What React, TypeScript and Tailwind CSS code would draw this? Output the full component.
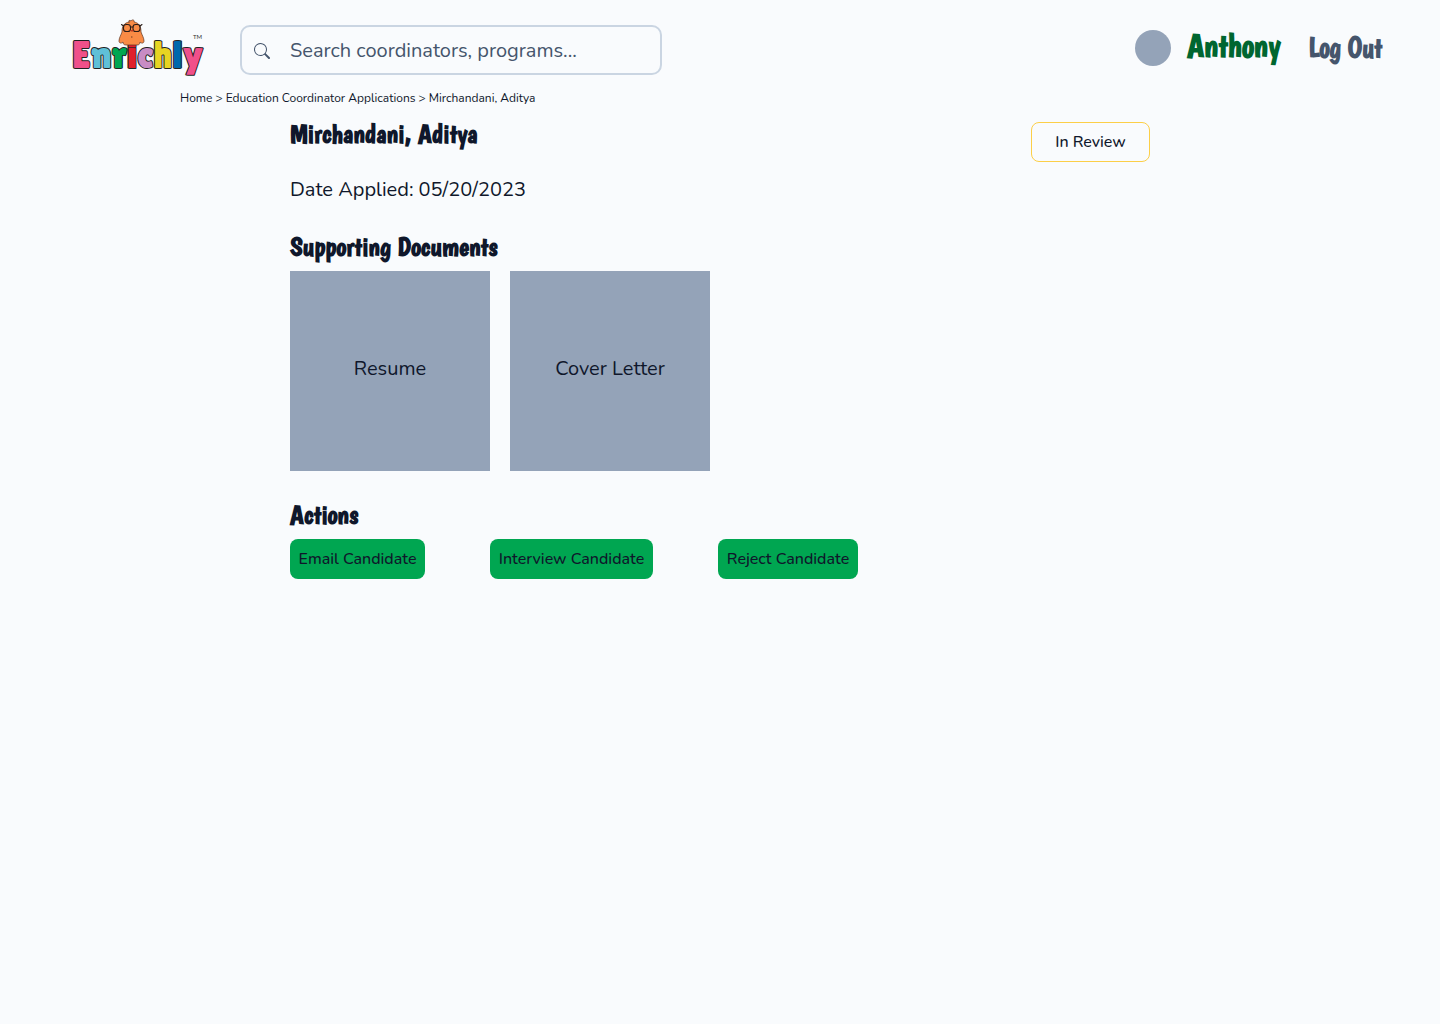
import { useState } from "react";
import { BsSearch } from "react-icons/bs";

const documents = ["Resume", "Cover Letter"];

const actions = [
  { label: "Email Candidate", width: "w-[135px]" },
  { label: "Interview Candidate", width: "w-[163px]" },
  { label: "Reject Candidate", width: "w-[140px]" },
];

const logoLetters = [
  { char: "E", fill: "#f0508a" },
  { char: "n", fill: "#5fc0d8" },
  { char: "r", fill: "#00a651" },
  { char: "i", fill: "#e0202c" },
  { char: "c", fill: "#c88cc4" },
  { char: "h", fill: "#e8d422" },
  { char: "l", fill: "#0068ac" },
  { char: "y", fill: "#f0508a" },
];

export default function App() {
  return (
    <div className="min-h-screen bg-[#f9fbfd] font-['Nunito','Lato',sans-serif] text-slate-900">
      <Header />
      <nav aria-label="Breadcrumb" className="mx-auto max-w-[1080px] text-[12px] leading-4">
        <ol className="flex gap-[3px]">
          <li>
            <a href="#home">Home</a>
          </li>
          <li aria-hidden>&gt;</li>
          <li>
            <a href="#applications">Education Coordinator Applications</a>
          </li>
          <li aria-hidden>&gt;</li>
          <li aria-current="page">Mirchandani, Aditya</li>
        </ol>
      </nav>
      <Application />
    </div>
  );
}

function Header() {
  const [query, setQuery] = useState("");

  return (
    <header className="flex h-[90px] items-start justify-between pl-[70px] pr-[58px]">
      <div className="flex items-start gap-9 pt-[18px]">
        <a href="#home" aria-label="Enrichly">
          <Logo />
        </a>
        <div className="mt-[7px] flex h-[50px] w-[422px] items-center gap-5 rounded-[10px] border-2 border-slate-300 px-3 pt-[2px]">
          <BsSearch className="size-4 shrink-0 text-slate-600" />
          <input
            type="text"
            aria-label="Search coordinators and programs"
            value={query}
            onChange={(e) => setQuery(e.target.value)}
            placeholder="Search coordinators, programs..."
            className="w-full bg-transparent text-[20px] outline-none placeholder:text-slate-600"
          />
        </div>
      </div>

      <div className="flex h-24 items-center font-['Chewy','Boogaloo',sans-serif] font-bold">
        <span className="size-9 rounded-full bg-[#94a3b8]" />
        <a href="#profile" className="ml-4 pb-1 text-[33px] leading-9 text-[#006630]">
          Anthony
        </a>
        <button type="button" className="ml-7 text-[28px] leading-9 text-slate-600">
          Log Out
        </button>
      </div>
    </header>
  );
}

function Application() {
  return (
    <main className="mx-auto max-w-[860px] pt-4">
      <div className="flex items-start justify-between">
        <Heading level={1}>Mirchandani, Aditya</Heading>
        <button type="button" className="h-10 w-[119px] rounded-lg border border-[#fccf48] text-[16px] font-medium">
          In Review
        </button>
      </div>
      <p className="mt-[14px] text-[20px] leading-7">Date Applied: 05/20/2023</p>

      <section className="mt-[31px]">
        <Heading>Supporting Documents</Heading>
        <div className="mt-2 flex gap-5">
          {documents.map((name) => (
            <button key={name} type="button" className="size-[200px] bg-[#94a3b8] pb-1 text-[20px]">
              {name}
            </button>
          ))}
        </div>
      </section>

      <section className="mt-8">
        <Heading>Actions</Heading>
        <div className="mt-2 flex gap-[65px]">
          {actions.map((action) => (
            <button
              key={action.label}
              type="button"
              className={`h-10 rounded-lg bg-[#00a651] text-[16px] font-medium whitespace-nowrap ${action.width}`}
            >
              {action.label}
            </button>
          ))}
        </div>
      </section>
    </main>
  );
}

function Heading({ level = 2, children }: { level?: 1 | 2; children: React.ReactNode }) {
  const Tag = level === 1 ? "h1" : "h2";
  return <Tag className="pb-1 font-['Chewy','Boogaloo',sans-serif] text-[27px] leading-6 font-bold">{children}</Tag>;
}

function Logo() {
  return (
    <svg width="134" height="60" viewBox="-2 -2 134 60" className="overflow-visible" aria-hidden>
      <text
        x="0"
        y="48"
        fontFamily="'Lilita One', Lato, sans-serif"
        fontSize="38"
        stroke="#222"
        strokeWidth="2"
        strokeLinejoin="round"
        paintOrder="stroke"
      >
        {logoLetters.map((l) => (
          <tspan key={l.char} fill={l.fill}>
            {l.char}
          </tspan>
        ))}
        <tspan x="121" y="19" fontFamily="Lato, sans-serif" fontSize="6" fill="#333" stroke="none">
          TM
        </tspan>
      </text>
      <Chick />
    </svg>
  );
}

function Chick() {
  return (
    <g strokeLinecap="round" strokeLinejoin="round">
      <path
        d="M57 2c-1-2 1-2 2-1 1-2 4-1 3 1 5 1 7 4 7 10 1 3 3 6 3 9 0 2-2 3-4 1 0 2-1 3-3 3h-11c-2 0-3-1-3-3-2 2-4 1-4-1 0-3 2-6 3-9 0-6 2-9 7-10z"
        fill="#f98b45"
        stroke="#5a3220"
        strokeWidth="0.7"
      />
      <g fill="none" stroke="#2a1c18" strokeWidth="1.1">
        <rect x="51.500" y="4.500" width="7" height="7" rx="2.800" />
        <rect x="61" y="4.500" width="7" height="7" rx="2.800" />
        <path d="M58.500 7h2.500M51.500 6l-2-1.500M68 6l2-1.500" />
      </g>
      <path d="M58 10h4l-2 2z" fill="#c03a20" />
      <path d="M59.500 17h.5" stroke="#5a3220" />
    </g>
  );
}
